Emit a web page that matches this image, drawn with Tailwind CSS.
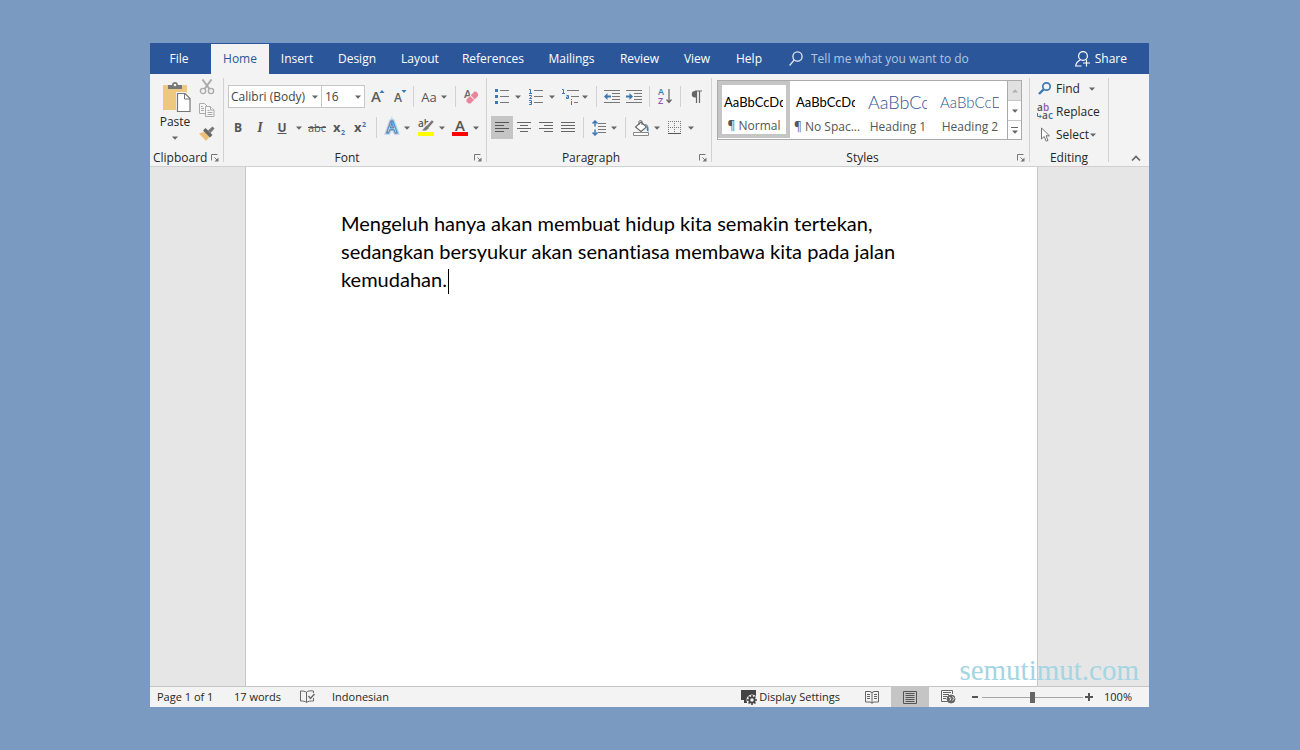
<!DOCTYPE html>
<html lang="en">
<head>
  <meta charset="UTF-8">
  <meta name="viewport" content="width=device-width, initial-scale=1.0">
  <title>Word - Document</title>
  <script src="https://cdn.jsdelivr.net/npm/@tailwindcss/browser@4"></script>
</head>
<body class="min-h-screen flex flex-col bg-[#7b9ac1] px-[150px] py-[43px] font-['Open_Sans','Noto_Sans',sans-serif] text-[12px] leading-4 text-[#262626]">

  <!-- shared glyphs -->
  <svg class="hidden">
    <symbol id="caret" viewBox="0 0 6 4"><path d="M0 .5h6L3 3.800z" fill="#666"/></symbol>
    <symbol id="launcher" viewBox="0 0 8 8"><path d="M.5 6.500v-6h6M3.500 3.500l3 3" fill="none" stroke="#777"/><path d="M7.500 3.500v4h-4z" fill="#777"/></symbol>
  </svg>

  <div class="flex flex-col grow bg-[#f3f3f3] mr-px">

    <!-- tabs -->
    <header class="flex items-stretch h-[31px] bg-[#2b579a] text-white">
      <nav class="flex items-stretch pt-px" aria-label="Ribbon tabs">
        <button class="w-[58px] mr-[3px]">File</button>
        <button class="w-[58px] bg-[#f3f3f3] text-[#2b579a]">Home</button>
        <button class="w-14">Insert</button>
        <button class="w-16">Design</button>
        <button class="w-[62px]">Layout</button>
        <button class="w-[84px]">References</button>
        <button class="w-[73px]">Mailings</button>
        <button class="w-[63px]">Review</button>
        <button class="w-[52px]">View</button>
        <button class="w-[52px]">Help</button>
      </nav>
      <label class="flex items-center gap-2 grow pl-[14px]">
        <svg class="w-[14px] h-4" viewBox="0 0 14 16" fill="none" stroke="#e3eaf4" stroke-width="1.300"><circle cx="8.500" cy="5.500" r="4.600"/><path d="M5.200 8.900L.6 14.500"/></svg>
        <input type="text" aria-label="Tell me what you want to do" placeholder="Tell me what you want to do" class="grow min-w-0 bg-transparent outline-none placeholder:text-[#b3c5e2]">
      </label>
      <button class="flex items-center gap-1 pr-[22px]">
        <svg class="w-4 h-[18px]" viewBox="0 0 16 18" fill="none" stroke="#fff" stroke-width="1.200"><circle cx="8" cy="6" r="4.400"/><path d="M.6 16.500c.4-3.600 2.200-5.600 4.800-6.500M.6 16h5.900M11.500 9.500v7M8 13h7"/></svg>
        Share
      </button>
    </header>

    <!-- ribbon -->
    <div class="flex items-stretch h-[93px] border-b border-[#d0d0d0]">

      <section class="w-[73px] shrink-0 flex flex-col justify-between" aria-label="Clipboard">
        <div class="flex pl-2 pt-[5px]">
          <button class="flex flex-col items-center w-[34px] pt-[3px]">
            <svg class="w-[29px] h-[32px] ml-[2px] shrink-0" viewBox="0 0 29 32"><path d="M1 3h24v25H1z" fill="#edc87e"/><path d="M6 7V3h4c0-4 6-4 6 0h4v4z" fill="#777"/><circle cx="13" cy="3" r="1.300" fill="#f3f3f3"/><path d="M14 10h10l5 5v16H14z" fill="#f3f3f3"/><path d="M15.500 11.500h7.500l5 5v13H15.500z" fill="#fff" stroke="#777" stroke-width="1.200"/><path d="M22.500 11.500V17H28" fill="none" stroke="#777"/></svg>
            <span>Paste</span>
            <svg class="w-[6px] h-1 mt-[6px]"><use href="#caret"/></svg>
          </button>
          <div class="flex flex-col gap-[7px] pl-[7px]">
            <button aria-label="Cut"><svg class="w-4 h-4" viewBox="0 0 16 16" fill="none" stroke="#aaa" stroke-width="1.400"><path d="M3.500.5l7 9.500M12.500.5L5.500 10" stroke-width="2"/><circle cx="4" cy="12" r="2.600"/><circle cx="12" cy="12" r="2.600"/></svg></button>
            <button aria-label="Copy"><svg class="w-4 h-4" viewBox="0 0 16 16" fill="#f6f6f6" stroke="#aaa"><path d="M.5 1.500h5l3 3v7h-8z"/><path d="M2 4.500h2M2 6.500h3M2 8.500h3"/><path d="M6.500 4.500h5l3.500 3.500v6.500H6.500z"/><path d="M11.500 4.500v3.500h3.500M8.500 8.500h2M8.500 10.500h5M8.500 12.500h5"/></svg></button>
            <button aria-label="Format Painter"><svg class="w-4 h-4" viewBox="0 0 16 16"><path d="M0 8.500l6-2 5 5-4 4.500z" fill="#edc07a"/><path d="M4 5.500l2.500-2.500 7 7L11 12.500z" fill="#666"/><path d="M9 5.500L13.500 1.500l2 2L11.500 8z" fill="#777"/></svg></button>
          </div>
        </div>
        <div class="flex items-center h-4 pl-[3px] justify-between pr-1"><span>Clipboard</span><button aria-label="Clipboard settings"><svg class="w-2 h-2"><use href="#launcher"/></svg></button></div>
      </section>
      <div class="w-px shrink-0 my-1 bg-[#d2d2d2]"></div>

      <section class="w-[262px] shrink-0 flex flex-col justify-between" aria-label="Font">
        <div class="flex flex-col gap-2 pl-1 pt-[11px]">
          <div class="flex items-center h-[23px]">
            <div class="relative w-[94px] h-[23px]">
              <select aria-label="Font" class="appearance-none w-full h-full bg-white border border-[#c6c6c6] pl-[2px] text-[#444]"><option>Calibri (Body)</option></select>
              <svg class="absolute right-1 top-[10px] w-[6px] h-1 pointer-events-none"><use href="#caret"/></svg>
            </div>
            <div class="relative w-11 h-[23px] -ml-px">
              <select aria-label="Font size" class="appearance-none w-full h-full bg-white border border-[#c6c6c6] pl-[3px] text-[#444]"><option>16</option></select>
              <svg class="absolute right-1 top-[10px] w-[6px] h-1 pointer-events-none"><use href="#caret"/></svg>
            </div>
            <button aria-label="Grow font" class="flex justify-center w-[22px] ml-[2px]"><svg class="w-[14px] h-4 overflow-visible" viewBox="0 0 14 16"><text x="0" y="13" font-size="15" font-weight="600" fill="#5c5c5c">A</text><path d="M8.500 4h5L11 1z" fill="#3b78b5"/></svg></button>
            <button aria-label="Shrink font" class="flex justify-center w-[22px]"><svg class="w-[13px] h-4 overflow-visible" viewBox="0 0 13 16"><text x="0" y="13" font-size="12" font-weight="600" fill="#5c5c5c">A</text><path d="M7.500 1h5L10 4z" fill="#3b78b5"/></svg></button>
            <div class="w-px h-[21px] mx-[2px] bg-[#d2d2d2]"></div>
            <button aria-label="Change case" class="flex items-center justify-center gap-1 w-[36px] text-[13px] text-[#555]">Aa<svg class="w-[6px] h-1"><use href="#caret"/></svg></button>
            <div class="w-px h-[21px] ml-[3px] mr-1 bg-[#d2d2d2]"></div>
            <button aria-label="Clear formatting" class="flex justify-center w-[22px]"><svg class="w-4 h-4 overflow-visible" viewBox="0 0 16 16"><text x="1" y="9" font-size="11" font-weight="600" fill="#666">A</text><path d="M2 11l9-8.500 5 5-8 8.500H6z" fill="#f3f3f3"/><path d="M3.500 10.500l3.500-3.500 4 4-3.500 3.500H5.500L3.500 12.500z" fill="#e8879b"/><path d="M7.800 6.200L11.500 2.500H13L15 4.500V7l-3.400 3.400z" fill="#e8879b"/></svg></button>
          </div>
          <div class="flex items-center h-[23px] text-[#555]">
            <button class="w-5 font-bold">B</button>
            <button class="w-6 font-['Liberation_Serif',serif] text-[14px] font-bold italic">I</button>
            <button class="w-5 font-bold underline">U</button>
            <button aria-label="Underline style" class="flex justify-center w-[13px]"><svg class="w-[6px] h-1"><use href="#caret"/></svg></button>
            <button class="w-6 text-[11px] line-through">abc</button>
            <button aria-label="Subscript" class="flex justify-center w-[20px]"><svg class="w-[13px] h-4 overflow-visible" viewBox="0 0 13 16"><text x="0" y="12" font-size="13" font-weight="700" fill="#555">x</text><text x="8" y="15" font-size="7" font-weight="700" fill="#3b78b5">2</text></svg></button>
            <button aria-label="Superscript" class="flex justify-center w-[23px]"><svg class="w-[13px] h-4 overflow-visible" viewBox="0 0 13 16"><text x="0" y="12" font-size="13" font-weight="700" fill="#555">x</text><text x="8" y="7" font-size="7" font-weight="700" fill="#3b78b5">2</text></svg></button>
            <div class="w-px h-[21px] mx-1 bg-[#d2d2d2]"></div>
            <button aria-label="Text effects" class="flex items-center justify-center gap-[5px] w-[33px]"><svg class="w-[14px] h-4 overflow-visible" viewBox="0 0 14 16"><text x="1.500" y="13" font-size="16" font-weight="600" fill="#fff" stroke="#b9d4ec" stroke-width="3.500">A</text><text x="1.500" y="13" font-size="16" font-weight="600" fill="#fff" stroke="#3b78b5" stroke-width="1">A</text></svg><svg class="w-[6px] h-1"><use href="#caret"/></svg></button>
            <button aria-label="Highlight" class="flex items-center justify-center gap-[5px] w-[35px]"><svg class="w-4 h-4 overflow-visible" viewBox="0 0 16 16"><text x="0" y="7" font-size="10" font-weight="600" fill="#555">ab</text><path d="M14.500 .5L7 8" stroke="#f3f3f3" stroke-width="4"/><path d="M14.800 1L9.500 7" stroke="#777" stroke-width="2.600"/><path d="M4 10.500L8.500 5.500l2.500 2.500-3 2.500z" fill="#777"/><path d="M0 12h16v4H0z" fill="#ff0"/></svg><svg class="w-[6px] h-1"><use href="#caret"/></svg></button>
            <button aria-label="Font color" class="flex items-center justify-center gap-[5px] w-[33px]"><svg class="w-4 h-4 overflow-visible" viewBox="0 0 16 16"><text x="3" y="11" font-size="15" font-weight="600" fill="#555">A</text><path d="M0 12h16v4H0z" fill="#f00"/></svg><svg class="w-[6px] h-1"><use href="#caret"/></svg></button>
          </div>
        </div>
        <div class="flex items-center h-4 pr-1"><span class="grow text-center pr-1">Font</span><button aria-label="Font settings"><svg class="w-2 h-2"><use href="#launcher"/></svg></button></div>
      </section>
      <div class="w-px shrink-0 my-1 bg-[#d2d2d2]"></div>

      <section class="w-[224px] shrink-0 flex flex-col justify-between" aria-label="Paragraph">
        <div class="flex flex-col gap-2 pl-1 pt-[11px]">
          <div class="flex items-center h-[23px]">
            <button aria-label="Bullets" class="flex items-center justify-center gap-[6px] w-[34px]"><svg class="w-[14px] h-4" viewBox="0 0 14 16"><path d="M0 0h3v3H0zM0 6h3v3H0zM0 12h3v3H0z" fill="#3b78b5"/><path d="M5 1.500h9M5 7.500h9M5 13.500h9" stroke="#777"/></svg><svg class="w-[6px] h-1"><use href="#caret"/></svg></button>
            <button aria-label="Numbering" class="flex items-center justify-center gap-[6px] w-[34px]"><svg class="w-[14px] h-4" viewBox="0 0 14 16"><path d="M0 .5h1.500V4M0 4.500h3M0 6.500h2.500v1.200L.5 9.500h2.500M0 11.500h2.500v4H0M.5 13.500h2" fill="none" stroke="#3b78b5"/><path d="M5 1.500h9M5 7.500h9M5 13.500h9" stroke="#777"/></svg><svg class="w-[6px] h-1"><use href="#caret"/></svg></button>
            <button aria-label="Multilevel list" class="flex items-center justify-center gap-[3px] w-8"><svg class="w-[17px] h-4" viewBox="0 0 17 16"><path d="M0 .5h1.500V4M0 4.500h3M4.500 6.500h2v3h-2v-1.500h2M9.500 10v1M9.500 12v4" fill="none" stroke="#3b78b5"/><path d="M5 1.500h12M9 7.500h8M12 13.500h4" stroke="#777"/></svg><svg class="w-[6px] h-1"><use href="#caret"/></svg></button>
            <div class="w-px h-[21px] ml-[5px] mr-1 bg-[#d2d2d2]"></div>
            <button aria-label="Decrease indent" class="flex justify-center w-[22px]"><svg class="w-4 h-[14px]" viewBox="0 0 16 14"><path d="M0 .5h16M8 3.500h8M8 6.500h8M8 9.500h8M0 12.500h16" stroke="#777"/><path d="M0 6.500L3.500 3v2.500H7v2H3.500V10z" fill="#3b78b5"/></svg></button>
            <button aria-label="Increase indent" class="flex justify-center w-[22px]"><svg class="w-4 h-[14px]" viewBox="0 0 16 14"><path d="M0 .5h16M8 3.500h8M8 6.500h8M8 9.500h8M0 12.500h16" stroke="#777"/><path d="M7 6.500L3.500 3v2.500H0v2h3.500V10z" fill="#3b78b5"/></svg></button>
            <div class="w-px h-[21px] mx-1 bg-[#d2d2d2]"></div>
            <button aria-label="Sort" class="flex justify-center w-[22px]"><svg class="w-[14px] h-[17px] overflow-visible" viewBox="0 0 14 17"><text x="0" y="7" font-size="9" font-weight="600" fill="#3b78b5">A</text><text x="0" y="16" font-size="9" font-weight="600" fill="#9456b3">Z</text><path d="M11 1v13M8.500 11.500L11 14.500l2.500-3" fill="none" stroke="#666" stroke-width="1.200"/></svg></button>
            <div class="w-px h-[21px] mx-1 bg-[#d2d2d2]"></div>
            <button aria-label="Show marks" class="flex justify-center w-[22px]"><svg class="w-[11px] h-[14px]" viewBox="0 0 11 14"><path d="M5 1H4a3.200 3.200 0 000 6.500h1z" fill="#666"/><path d="M4 1h7M5.500 1v12M8.500 1v12" stroke="#666" stroke-width="1.200"/></svg></button>
          </div>
          <div class="flex items-center h-[23px]">
            <button aria-label="Align left" class="flex items-center justify-center w-[22px] h-[23px] bg-[#c5c5c5]"><svg class="w-[14px] h-[11px]" viewBox="0 0 14 11"><path d="M0 .5h14M0 3.500h9M0 6.500h14M0 9.500h9" stroke="#555"/></svg></button>
            <button aria-label="Center" class="flex items-center justify-center w-[22px] h-[23px]"><svg class="w-[14px] h-[11px]" viewBox="0 0 14 11"><path d="M0 .5h14M3 3.500h8M0 6.500h14M3 9.500h8" stroke="#666"/></svg></button>
            <button aria-label="Align right" class="flex items-center justify-center w-[22px] h-[23px]"><svg class="w-[14px] h-[11px]" viewBox="0 0 14 11"><path d="M0 .5h14M5 3.500h9M0 6.500h14M5 9.500h9" stroke="#666"/></svg></button>
            <button aria-label="Justify" class="flex items-center justify-center w-[22px] h-[23px]"><svg class="w-[14px] h-[11px]" viewBox="0 0 14 11"><path d="M0 .5h14M0 3.500h14M0 6.500h14M0 9.500h14" stroke="#666"/></svg></button>
            <div class="w-px h-[21px] mx-1 bg-[#d2d2d2]"></div>
            <button aria-label="Line spacing" class="flex items-center justify-center gap-1 w-[33px]"><svg class="w-[15px] h-4" viewBox="0 0 15 16"><path d="M3 1v5.500M3 9.500V15M.5 3.500L3 1l2.500 2.500M.5 12.500L3 15l2.500-2.500" fill="none" stroke="#3b78b5" stroke-width="1.500"/><path d="M6 3.500h8M6 6.500h8M6 9.500h8M6 12.500h8" stroke="#777"/></svg><svg class="w-[6px] h-1"><use href="#caret"/></svg></button>
            <div class="w-px h-[21px] mx-1 bg-[#d2d2d2]"></div>
            <button aria-label="Shading" class="flex items-center justify-center gap-1 w-[33px]"><svg class="w-[17px] h-4" viewBox="0 0 17 16"><path d="M8 2l5.500 5L8 11.500 2.500 7z" fill="#fff" stroke="#666" stroke-width="1.100"/><path d="M6 5V1.500C6 .2 9 .2 9 1.500V5" fill="none" stroke="#666"/><path d="M11.500 4c3 0 4.500 2 4 7.500-2-.5-2.500-2-1-5z" fill="#3b78b5"/><path d="M.5 12.500h15v3H.5z" fill="#fff" stroke="#888"/></svg><svg class="w-[6px] h-1"><use href="#caret"/></svg></button>
            <button aria-label="Borders" class="flex items-center justify-center gap-[7px] w-[35px]"><svg class="w-[13px] h-[13px]" viewBox="0 0 13 13" stroke="#777"><path d="M0 .5h13M0 6.500h13M.5 0v12M6.500 0v12M12.500 0v12" stroke-dasharray="1 1"/><path d="M0 12.500h13" stroke="#555"/></svg><svg class="w-[6px] h-1"><use href="#caret"/></svg></button>
          </div>
        </div>
        <div class="flex items-center h-4 pr-1"><span class="grow text-center pr-1">Paragraph</span><button aria-label="Paragraph settings"><svg class="w-2 h-2"><use href="#launcher"/></svg></button></div>
      </section>
      <div class="w-px shrink-0 my-1 bg-[#d2d2d2]"></div>

      <section class="w-[317px] shrink-0 flex flex-col justify-between" aria-label="Styles">
        <div class="flex h-[60px] ml-[5px] mr-[7px] mt-[6px] bg-white border border-[#ababab]">
          <button class="flex flex-col w-[72px] border-4 border-[#c5c5c5] mb-px text-[#555] pt-2">
            <span class="block w-[61px] h-[18px] pl-[2px] overflow-hidden whitespace-nowrap text-left font-[Lato,sans-serif] text-[13px] leading-[18px] text-black">AaBbCcDd</span>
            <span class="w-full text-center mt-2">¶ Normal</span>
          </button>
          <button class="flex flex-col w-[72px] text-[#555] pt-3 px-1">
            <span class="block w-[61px] h-[18px] pl-[2px] overflow-hidden whitespace-nowrap text-left font-[Lato,sans-serif] text-[13px] leading-[18px] text-black">AaBbCcDd</span>
            <span class="w-full text-center mt-2 whitespace-nowrap">¶ No Spac...</span>
          </button>
          <button class="flex flex-col w-[72px] text-[#555] pt-3 px-1">
            <span class="block w-[61px] h-[18px] pl-[2px] overflow-hidden whitespace-nowrap text-left font-[Lato,sans-serif] font-light text-[18px] leading-[18px] text-[#2f5496]">AaBbCc</span>
            <span class="w-full text-center mt-2">Heading 1</span>
          </button>
          <button class="flex flex-col w-[72px] text-[#555] pt-3 px-1">
            <span class="block w-[61px] h-[18px] pl-[2px] overflow-hidden whitespace-nowrap text-left font-[Lato,sans-serif] font-light text-[15px] leading-[18px] text-[#2f5496]">AaBbCcDd</span>
            <span class="w-full text-center mt-2">Heading 2</span>
          </button>
          <div class="flex flex-col grow ml-px border-l border-[#ababab]">
            <button aria-label="Scroll up" class="flex items-center justify-center h-5 bg-[#e1e1e1] border-b border-[#c6c6c6]"><svg class="w-[6px] h-1 rotate-180 opacity-40"><use href="#caret"/></svg></button>
            <button aria-label="Scroll down" class="flex items-center justify-center h-5 border-b border-[#c6c6c6]"><svg class="w-[6px] h-1"><use href="#caret"/></svg></button>
            <button aria-label="More styles" class="flex flex-col items-center justify-center gap-[2px] grow"><span class="w-[7px] h-px bg-[#666]"></span><svg class="w-[6px] h-1"><use href="#caret"/></svg></button>
          </div>
        </div>
        <div class="flex items-center h-4 pr-1"><span class="grow text-center pr-1">Styles</span><button aria-label="Styles settings"><svg class="w-2 h-2"><use href="#launcher"/></svg></button></div>
      </section>
      <div class="w-px shrink-0 my-1 bg-[#d2d2d2]"></div>

      <section class="w-[78px] shrink-0 flex flex-col justify-between" aria-label="Editing">
        <div class="flex flex-col gap-[7px] pl-[7px] pt-[7px]">
          <button class="flex items-center whitespace-nowrap"><svg class="w-[15px] h-4 mr-1" viewBox="0 0 15 16" fill="none" stroke="#3b78b5"><circle cx="9.500" cy="5.500" r="3.700" stroke-width="1.700"/><path d="M6.500 8.500L2 13" stroke-width="2.400"/></svg>Find<svg class="w-[6px] h-1 ml-[9px]"><use href="#caret"/></svg></button>
          <button class="flex items-center whitespace-nowrap"><svg class="w-[17px] h-4 mr-[2px] overflow-visible" viewBox="0 0 17 16"><g font-size="10" font-weight="600"><text x="0" y="7" fill="#555">a</text><text x="6" y="7" fill="#9456b3">b</text><text x="5" y="15" fill="#555">a</text><text x="11" y="15" fill="#3b78b5">c</text></g><path d="M.5 9v3.500H4M2.500 10.800l1.700 1.700-1.700 1.700" fill="none" stroke="#3b78b5"/></svg>Replace</button>
          <button class="flex items-center whitespace-nowrap"><svg class="w-[15px] h-4 mr-1" viewBox="0 0 15 16"><path d="M4.500 1v11l2.700-2.500 2 4.700 1.800-.8-2-4.600h3.500z" fill="#fff" stroke="#777"/></svg>Select<svg class="w-[6px] h-1 ml-px"><use href="#caret"/></svg></button>
        </div>
        <div class="h-4 text-center">Editing</div>
      </section>
      <div class="w-px shrink-0 my-1 bg-[#d2d2d2]"></div>
      <button aria-label="Collapse ribbon" class="ml-auto self-end pr-2 pb-1"><svg class="w-[10px] h-[7px]" viewBox="0 0 10 7"><path d="M1 5.500l4-4 4 4" fill="none" stroke="#666" stroke-width="1.700"/></svg></button>
    </div>

    <!-- document -->
    <main class="relative flex justify-center grow bg-[#e6e6e6] pr-4">
      <div contenteditable="true" role="textbox" aria-label="Document" class="w-[793px] max-w-full bg-white border-x border-[#c6c6c6] px-[95px] pt-[42px] outline-none font-[Lato,sans-serif] [font-variant-ligatures:none] text-[20px] leading-7 text-black">
        <p>Mengeluh hanya akan membuat hidup kita semakin tertekan, sedangkan bersyukur akan senantiasa membawa kita pada jalan kemudahan.<span class="inline-block w-px h-[25px] ml-px align-middle bg-black"></span></p>
      </div>
      <div class="absolute right-[10px] bottom-0 font-['Liberation_Serif',serif] text-[29px] leading-8 text-[#a4d5e3]">semutimut.com</div>
    </main>

    <!-- status bar -->
    <footer class="flex items-center h-[21px] border-t border-[#c6c6c6] text-[11px]">
      <span class="w-[77px] pl-[7px]">Page 1 of 1</span>
      <span class="w-[73px] pl-[7px]">17 words</span>
      <button aria-label="Proofing" class="w-8"><svg class="w-[15px] h-[14px]" viewBox="0 0 15 14" fill="none" stroke="#666"><path d="M6.500 2.500C5 1 3 1 .5 1v10c2.500 0 4.500 0 6 1.500V2C8 1 10 .5 13.500 1v2M6.500 12.500c1.500-1.500 4-1.500 7-1.500V8"/><path d="M8.500 6l2 2.500L14.500 4" stroke-width="1.400"/></svg></button>
      <span class="grow">Indonesian</span>
      <button class="flex items-center gap-[2px] mr-[13px]">
        <svg class="w-4 h-4" viewBox="0 0 16 16"><path d="M0 1h15v7H9l-2 3H0z" fill="#444"/><path d="M3 11h3v3H3z" fill="#444"/><circle cx="11" cy="11" r="5.500" fill="#f3f3f3"/><circle cx="11" cy="11" r="2.700" fill="none" stroke="#444" stroke-width="1.800"/><path d="M11 6v2M11 14v2M6 11h2M14 11h2M7.500 7.500l1.400 1.400M13.100 13.100l1.400 1.400M7.500 14.500l1.400-1.400M13.100 8.900l1.400-1.400" stroke="#444" stroke-width="1.600"/></svg>
        Display Settings
      </button>
      <button aria-label="Read mode" class="flex items-center justify-center w-[38px] h-5"><svg class="w-[14px] h-[13px]" viewBox="0 0 14 13" fill="none" stroke="#666"><path d="M.5.5H5l2 1 2-1h4.500v10.500H9l-2 1-2-1H.5zM7 1v11.500M2 3.500h3M2 5.500h3M2 7.500h3M9 3.500h3M9 5.500h3M9 7.500h3"/></svg></button>
      <button aria-label="Print layout" class="flex items-center justify-center w-[38px] h-5 bg-[#c5c5c5]"><svg class="w-[14px] h-[13px]" viewBox="0 0 14 13" fill="none" stroke="#555"><path d="M.5.5h13v12H.5zM2.500 2.500h9M2.500 4.500h9M2.500 6.500h9M2.500 8.500h9M2.500 10.500h9"/></svg></button>
      <button aria-label="Web layout" class="flex items-center justify-center w-[38px] h-5"><svg class="w-[15px] h-[14px]" viewBox="0 0 15 14" fill="none" stroke="#666"><path d="M6 11.500H.5V.5h11V4M2 2.500h8M2 4.500h6M2 6.500h4M2 8.500h3"/><circle cx="10" cy="9" r="4" fill="#666"/><path d="M8 7l2 1.500-1 2M11.500 6.500l1.500 2-1.500 2" stroke="#eee"/></svg></button>
      <div class="flex items-center ml-[5px]">
        <button aria-label="Zoom out" class="flex items-center w-[10px] h-4"><span class="w-[6px] h-[2px] bg-[#555]"></span></button>
        <input type="range" aria-label="Zoom" min="0" max="100" value="50" class="appearance-none w-[101px] h-3 bg-transparent [&::-webkit-slider-runnable-track]:h-px [&::-webkit-slider-runnable-track]:bg-[#a6a6a6] [&::-webkit-slider-thumb]:appearance-none [&::-webkit-slider-thumb]:w-[5px] [&::-webkit-slider-thumb]:h-[11px] [&::-webkit-slider-thumb]:-mt-[5px] [&::-webkit-slider-thumb]:bg-[#666]">
        <button aria-label="Zoom in" class="ml-[2px]"><svg class="w-2 h-2" viewBox="0 0 8 8"><path d="M0 4h8M4 0v8" stroke="#555" stroke-width="2"/></svg></button>
        <span class="ml-[11px] mr-[17px]">100%</span>
      </div>
    </footer>
  </div>
</body>
</html>
